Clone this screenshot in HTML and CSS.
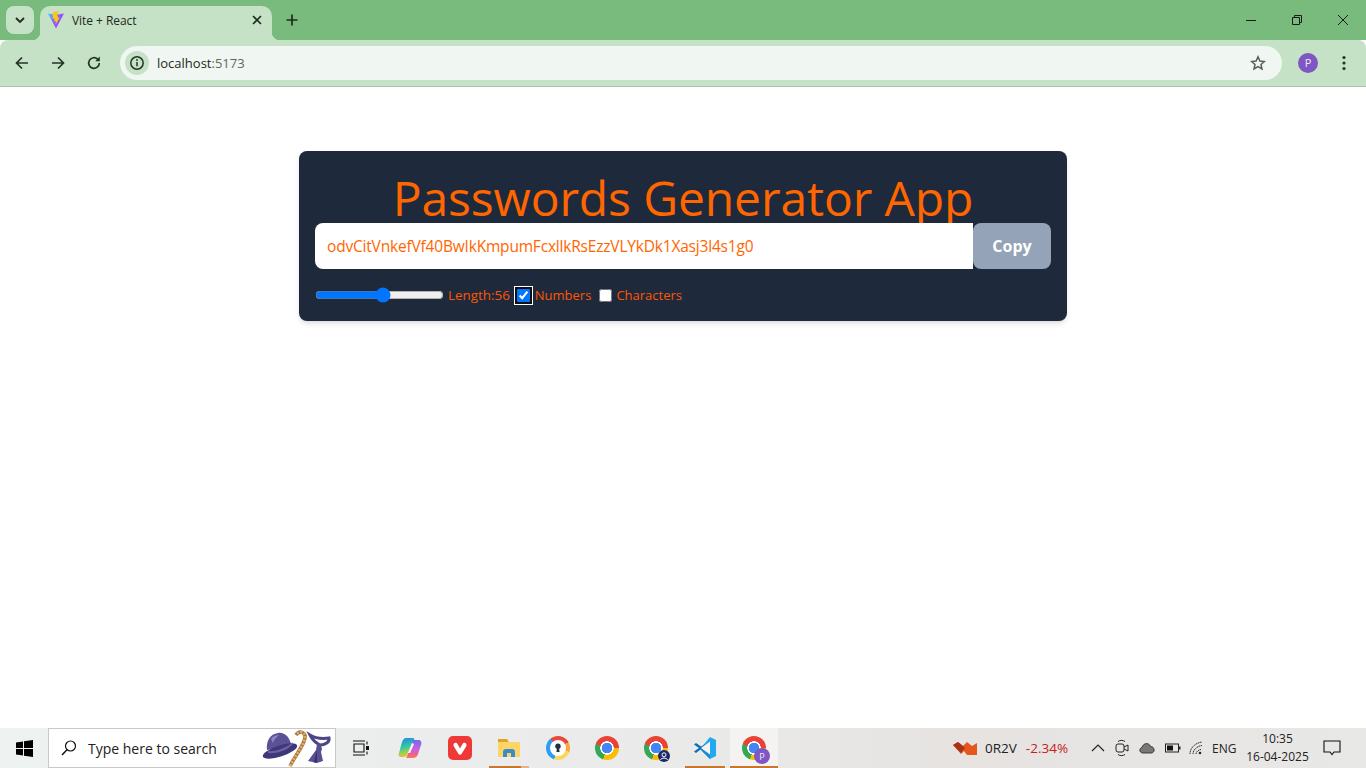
FILE: index.html
```html
<!DOCTYPE html>
<html lang="en">
<head>
  <meta charset="UTF-8">
  <meta name="viewport" content="width=device-width, initial-scale=1.0">
  <title>Vite + React</title>
  <link rel="stylesheet" href="styles.css">
</head>
<body>
  <div class="window">
    <div class="tabstrip">
      <div class="tab-search">
        <svg width="12" height="12" viewBox="0 0 12 12"><path d="M2 4l4 4 4-4" fill="none" stroke="#1f2a20" stroke-width="1.8"/></svg>
      </div>
      <div class="tab">
        <svg class="favicon" width="16" height="18" viewBox="0 0 16 18">
          <defs>
            <linearGradient id="viteGrad" x1="0" y1="0" x2="1" y2="0.700">
              <stop offset="0" stop-color="#41c8ff"/>
              <stop offset="0.550" stop-color="#8a5cf6"/>
              <stop offset="1" stop-color="#bd34fe"/>
            </linearGradient>
          </defs>
          <path d="M0 2.500L8 3.800 16 2.500 8 17.500z" fill="url(#viteGrad)"/>
          <path d="M11 0L5 1.200 4.600 7.800 6.600 7.400 6.200 10.500 7.900 10 7.600 13.500 11.800 6.400 9.500 6.800 10.200 4.600 8.700 4.800z" fill="#ffc517"/>
        </svg>
        <span class="tab-title">Vite + React</span>
        <svg class="tab-close" width="10" height="10" viewBox="0 0 10 10"><path d="M1 1l8 8M9 1l-8 8" stroke="#1f2a20" stroke-width="1.6"/></svg>
      </div>
      <svg class="new-tab" width="12" height="12" viewBox="0 0 12 12"><path d="M6 0.5v11M0.5 6h11" stroke="#1f2a20" stroke-width="1.7"/></svg>
      <div class="win-controls">
        <svg width="12" height="12" viewBox="0 0 12 12"><path d="M1 6.5h10" stroke="#1a1a1a"/></svg>
        <svg width="12" height="12" viewBox="0 0 12 12"><path d="M1.5 3.5h7v7h-7zM3.5 3.5v-2h7v7h-2" fill="none" stroke="#1a1a1a"/></svg>
        <svg width="12" height="12" viewBox="0 0 12 12"><path d="M1 1l10 10M11 1L1 11" stroke="#1a1a1a"/></svg>
      </div>
    </div>

    <div class="toolbar">
      <svg class="nav-icon" width="16" height="16" viewBox="0 0 16 16"><path d="M14 8H2.5M8 2.5L2.5 8 8 13.5" fill="none" stroke="#263228" stroke-width="1.7"/></svg>
      <svg class="nav-icon" width="16" height="16" viewBox="0 0 16 16"><path d="M2 8h11.5M8 2.5L13.5 8 8 13.5" fill="none" stroke="#263228" stroke-width="1.7"/></svg>
      <svg class="nav-icon" width="16" height="16" viewBox="0 0 16 16"><path d="M13.3 8a5.3 5.3 0 1 1-1.6-3.8" fill="none" stroke="#263228" stroke-width="1.7"/><path d="M13.8 1.6v4.6H9.2z" fill="#263228"/></svg>
      <div class="omnibox">
        <div class="site-info">
          <svg width="16" height="16" viewBox="0 0 16 16"><circle cx="8" cy="8" r="6.2" fill="none" stroke="#263228" stroke-width="1.5"/><path d="M8 7v4.2" stroke="#263228" stroke-width="1.5"/><circle cx="8" cy="5" r="0.9" fill="#263228"/></svg>
        </div>
        <span class="url">localhost<span class="url-port">:5173</span></span>
        <svg class="star" width="16" height="16" viewBox="0 0 16 16"><path d="M8 1.8l1.9 4.2 4.5.5-3.4 3 1 4.5L8 11.7l-4 2.3 1-4.5-3.4-3 4.5-.5z" fill="none" stroke="#555f57" stroke-width="1.5"/></svg>
      </div>
      <div class="avatar">P</div>
      <svg class="menu-dots" width="4" height="16" viewBox="0 0 4 16"><circle cx="2" cy="2.5" r="1.6" fill="#263228"/><circle cx="2" cy="8" r="1.6" fill="#263228"/><circle cx="2" cy="13.5" r="1.6" fill="#263228"/></svg>
    </div>

    <main class="page">
      <div class="card">
        <h1 class="card-title">Passwords Generator App</h1>
        <div class="password-row">
          <input class="password-input" type="text" readonly value="odvCitVnkefVf40BwIkKmpumFcxllkRsEzzVLYkDk1Xasj3l4s1g0">
          <button class="copy-btn">Copy</button>
        </div>
        <div class="options">
          <input class="length-range" type="range" min="6" max="100" value="56">
          <label class="opt-label length-label">Length:56</label>
          <input class="opt-check focused" type="checkbox" checked>
          <label class="opt-label numbers-label">Numbers</label>
          <input class="opt-check" type="checkbox">
          <label class="opt-label">Characters</label>
        </div>
      </div>
    </main>

    <div class="taskbar">
      <div class="start">
        <svg width="17" height="17" viewBox="0 0 17 17"><path d="M0 2.5l7-1v6.500H0zM8 1.300l9-1.300v8H8zM0 9h7v6.500l-7-1zM8 9h9v8l-9-1.300z" fill="#000"/></svg>
      </div>
      <div class="searchbox">
        <svg width="18" height="18" viewBox="0 0 18 18"><circle cx="10.500" cy="7" r="5" fill="none" stroke="#111" stroke-width="1.200"/><path d="M7 10.800L2 16" stroke="#111" stroke-width="1.500"/></svg>
        <span class="search-text">Type here to search</span>
        <svg class="doodle" width="70" height="38" viewBox="0 0 70 38">
          <path d="M5 21C4 12 8 5 16 4c6-1 10 3 12 8l2 5z" fill="#5b5296"/>
          <path d="M9 10c2-3 5-4 8-4-2 2-5 4-6 8z" fill="#8d86c0"/>
          <ellipse cx="18" cy="22" rx="18" ry="5.500" fill="#3e3878" transform="rotate(-18 18 22)"/>
          <path d="M6 22c8 1 18-3 25-9l-1 3c-6 6-17 9-24 8z" fill="#6a62a6"/>
          <path d="M28 37C33 27 41 18 43 9c1-6-6-8-9-3" fill="none" stroke="#a9743a" stroke-width="3.600"/>
          <path d="M28 37C33 27 41 18 43 9c1-6-6-8-9-3" fill="none" stroke="#e0b070" stroke-width="2.600" stroke-dasharray="2 1.500"/>
          <path d="M48 6c5 3 12 4 19 3 1 4-4 7-9 7-4-2-8-6-10-10z" fill="none" stroke="#4c4688" stroke-width="3"/>
          <path d="M55 15l4 1 1 4-1 3 2 9-6 2-9-2 8-11z" fill="#565092"/>
          <path d="M55 21l0 12-2 1-1-1z" fill="#37326c"/>
        </svg>
      </div>
      <div class="task-icons">
        <div class="task-slot">
          <svg width="16" height="16" viewBox="0 0 16 16"><path d="M0 1h12M0 15h12M1 4h10v8H1zM14 1.500v3M14 11.500v3" fill="none" stroke="#111" stroke-width="1.100"/><rect x="13" y="6" width="3" height="4" fill="#111"/></svg>
        </div>
        <div class="task-slot wide">
          <svg width="24" height="22" viewBox="0 0 24 22">
            <defs>
              <linearGradient id="copA" x1="0.400" y1="0" x2="0.600" y2="1"><stop offset="0" stop-color="#1f8fe8"/><stop offset="0.450" stop-color="#34c8a0"/><stop offset="0.750" stop-color="#a8d048"/><stop offset="1" stop-color="#f5c030"/></linearGradient>
              <linearGradient id="copB" x1="0.500" y1="0" x2="0.500" y2="1"><stop offset="0" stop-color="#6d6cf0"/><stop offset="0.500" stop-color="#c860e0"/><stop offset="0.800" stop-color="#f06090"/><stop offset="1" stop-color="#f58040"/></linearGradient>
            </defs>
            <path d="M8 1h7c1 0 2 1 1 2l-7 15c-1 1-2 2-3 2H3c-2 0-3-2-2-4L4 5c1-2 2-4 4-4z" fill="url(#copA)"/>
            <path d="M15 3h5c3 0 4 2 3 5l-3 9c-1 3-3 4-5 4H9c-1 0-1-1 0-2l5-12c0-2 0-3 1-4z" fill="url(#copB)"/>
            <path d="M14 6l-4 10 2 0 4-9z" fill="#f8f8fa"/>
          </svg>
        </div>
        <div class="task-slot">
          <svg width="24" height="24" viewBox="0 0 24 24"><rect width="24" height="24" rx="5" fill="#ef3939"/><path d="M5.500 9c0-2.500 3-3 4-1l2.500 4.500L14.500 8c1-2 4-1.500 4 1 0 .8-.4 1.500-1 2.500L13.500 18c-.6 1-2.400 1-3 0L6.500 11.500C6 10.500 5.500 9.800 5.500 9z" fill="#fff"/></svg>
        </div>
        <div class="task-slot running">
          <svg width="24" height="24" viewBox="0 0 24 24"><path d="M1 3h9l2 3H1z" fill="#e0a526"/><path d="M1 6h22v15H1z" fill="#fbd667"/><path d="M6 21v-5a3 3 0 0 1 3-3h6a3 3 0 0 1 3 3v5h-4v-4h-4v4z" fill="#3a8cc9"/></svg>
        </div>
        <div class="task-slot">
          <div class="alt-browser"><div class="alt-browser-core"><svg width="8" height="10" viewBox="0 0 8 10"><circle cx="4" cy="3.200" r="2.700" fill="#22303c"/><path d="M3 4.500h2l.6 4.500H2.400z" fill="#22303c"/></svg></div></div>
        </div>
        <div class="task-slot"><div class="chrome-icon"></div></div>
        <div class="task-slot">
          <div class="chrome-icon"><span class="chrome-badge dark">
            <svg width="10" height="10" viewBox="0 0 10 10"><circle cx="5" cy="3.800" r="2" fill="none" stroke="#fff"/><path d="M1.500 9c.5-2.500 6.500-2.500 7 0" fill="none" stroke="#fff"/></svg>
          </span></div>
        </div>
        <div class="task-slot running code">
          <svg width="24" height="24" viewBox="0 0 24 24"><path d="M17 1l6 3v16l-6 3-10-10z" fill="#23a9f2"/><path d="M17 1v22L7 13l10-7.500z" fill="#1a8ad0"/><path d="M17 6L3 17 1 15.500 6 12 1 8.500 3 7l5 3.600" fill="#0b6fb5"/><path d="M17 5.500v13L8 12z" fill="#f3f3f2"/></svg>
        </div>
        <div class="task-slot active">
          <div class="chrome-icon"><span class="chrome-badge purple">P</span></div>
        </div>
      </div>
      <div class="tray">
        <div class="stock">
          <svg width="24" height="14" viewBox="0 0 24 14"><path d="M0 4l5-3 5 4 4-4 5 4 5-3v12H14l-3-4-3 3z" fill="#e5561c"/><path d="M0 4l5-3 5 4 2 2-4 5z" fill="#a8321a"/></svg>
          <span class="stock-name">0R2V</span>
          <span class="stock-change">-2.34%</span>
        </div>
        <svg class="tray-chevron" width="14" height="8" viewBox="0 0 14 8"><path d="M1 7l6-6 6 6" fill="none" stroke="#222" stroke-width="1.200"/></svg>
        <svg class="tray-icon" width="14" height="18" viewBox="0 0 14 18"><rect x="1" y="5" width="8" height="8" rx="2" fill="none" stroke="#222"/><path d="M9 8l4-2v6l-4-2M3 2.500c2-1.500 5-1.500 7 0M3 15.500c2 1.500 5 1.500 7 0" fill="none" stroke="#222"/></svg>
        <svg class="tray-icon" width="16" height="12" viewBox="0 0 16 12"><path d="M4 11c-4 0-4-5-1-5.500C4 1 10 0 11.500 4.500 16 4.500 16.500 11 12 11z" fill="#777" stroke="#222" stroke-width="0.800"/></svg>
        <svg class="tray-icon" width="16" height="10" viewBox="0 0 16 10"><rect x="0.500" y="1" width="13" height="8" fill="none" stroke="#222"/><rect x="2" y="2.500" width="6" height="5" fill="#111"/><rect x="14" y="3.500" width="1.500" height="3" fill="#222"/></svg>
        <svg class="tray-icon wifi" width="14" height="14" viewBox="0 0 14 14"><path d="M1 13C1 7 6 2 13 1M4 13c0-4 4-8 9-8.500M7 13c0-2 2-4 5-4.500" fill="none" stroke="#333" stroke-dasharray="1.500 0.500"/><circle cx="11" cy="12" r="1.300" fill="#222"/></svg>
        <span class="tray-lang">ENG</span>
        <div class="clock"><span>10:35</span><span>16-04-2025</span></div>
        <svg class="notify" width="18" height="16" viewBox="0 0 18 16"><path d="M1 1h16v11h-6l-2 2.500L7 12H1z" fill="none" stroke="#111" stroke-width="1.100"/></svg>
      </div>
    </div>
  </div>
</body>
</html>
```

FILE: styles.css
```css
html, body {
  margin: 0;
  height: 100%;
}
body {
  font-family: 'Open Sans', 'Noto Sans', sans-serif;
  background-color: #ffffff;
  overflow: hidden;
}
.window {
  display: flex;
  flex-direction: column;
  height: 768px;
}

/* browser chrome */
.tabstrip {
  display: flex;
  align-items: flex-start;
  height: 40px;
  background-color: #79bb7c;
}
.tab-search {
  display: flex;
  align-items: center;
  justify-content: center;
  width: 28px;
  height: 28px;
  margin: 6px 0 0 6px;
  border-radius: 8px;
  background-color: #c5e1c6;
}
.tab {
  position: relative;
  display: flex;
  align-items: center;
  width: 232px;
  height: 34px;
  margin: 6px 0 0 6px;
  box-sizing: border-box;
  padding: 0 10px 6px 8px;
  border-radius: 10px 10px 0 0;
  background-color: #c5e1c6;
}
.tab::before,
.tab::after {
  content: "";
  position: absolute;
  bottom: 0;
  width: 8px;
  height: 8px;
}
.tab::before {
  left: -8px;
  background: radial-gradient(circle at 0 0, #79bb7c 8px, #c5e1c6 8.5px);
}
.tab::after {
  right: -8px;
  background: radial-gradient(circle at 100% 0, #79bb7c 8px, #c5e1c6 8.5px);
}
.favicon {
  flex-shrink: 0;
}
.tab-title {
  flex: 1;
  margin-left: 8px;
  font-size: 12px;
  letter-spacing: -0.05px;
  color: #1f2a20;
}
.new-tab {
  margin: 14px 0 0 14px;
}
.win-controls {
  display: flex;
  gap: 34px;
  margin: 14px 17px 0 auto;
}

.toolbar {
  display: flex;
  align-items: center;
  height: 46px;
  border-bottom: 1px solid #a9c4aa;
  border-radius: 8px 8px 0 0;
  background-color: #c5e1c6;
}
.nav-icon {
  flex-shrink: 0;
  margin-left: 20px;
}
.nav-icon:first-child {
  margin-left: 14px;
}
.omnibox {
  display: flex;
  align-items: center;
  flex: 1;
  height: 34px;
  margin: 0 16px 0 18px;
  border-radius: 17px;
  background-color: #f0f6f1;
}
.site-info {
  display: flex;
  align-items: center;
  justify-content: center;
  width: 24px;
  height: 24px;
  margin-left: 5px;
  border-radius: 50%;
  background-color: #c5e1c6;
}
.url {
  margin-left: 8px;
  font-size: 13px;
  color: #1f2a20;
}
.url-port {
  color: #5c6a5e;
}
.star {
  margin: 0 16px 0 auto;
}
.avatar {
  flex-shrink: 0;
  width: 20px;
  height: 20px;
  border-radius: 50%;
  background-color: #7e57c2;
  color: #f1e8ff;
  font-size: 11px;
  line-height: 20px;
  text-align: center;
}
.menu-dots {
  margin: 0 20px 0 24px;
}

/* the actual page */
.page {
  flex: 1;
  padding-top: 64px;
}
.card {
  width: 768px;
  height: 170px;
  margin: 0 auto;
  box-sizing: border-box;
  padding: 23px 16px 0;
  border-radius: 8px;
  background-color: #1e293b;
  box-shadow: 0 4px 6px -1px rgba(0, 0, 0, 0.1), 0 2px 4px -2px rgba(0, 0, 0, 0.1);
}
.card-title {
  margin: 0 0 1px;
  font-size: 48px;
  font-weight: 400;
  line-height: 48px;
  letter-spacing: -0.13px;
  color: #ff6600;
  text-align: center;
  white-space: nowrap;
}
.password-row {
  position: relative;
  display: flex;
  height: 46px;
}
.password-input {
  flex: 1;
  min-width: 0;
  box-sizing: border-box;
  padding: 0 12px;
  border: 0;
  outline: 0;
  border-radius: 8px 0 0 8px;
  background-color: #ffffff;
  font-family: inherit;
  font-size: 15.5px;
  letter-spacing: -0.19px;
  color: #ff6600;
}
.copy-btn {
  width: 78px;
  padding: 0;
  border: 0;
  border-radius: 8px;
  background-color: #94a3b8;
  font-family: inherit;
  font-size: 16px;
  font-weight: 700;
  color: #ffffff;
}
.options {
  display: flex;
  align-items: center;
  height: 16px;
  margin-top: 18px;
}
.length-range {
  width: 129px;
  height: 16px;
  margin: 0;
}
.opt-label {
  font-size: 13px;
  line-height: 18px;
  color: #ff5500;
}
.length-label {
  margin-left: 4px;
  font-size: 13.4px;
}
.opt-check {
  width: 13px;
  height: 13px;
  margin: 0 4px 0 8px;
}
.focused {
  margin: 0 5px 0 7px;
  border-radius: 3px;
  box-shadow: 0 0 0 2px #101010, 0 0 0 3px #ffffff;
}

/* windows taskbar */
.taskbar {
  display: flex;
  align-items: center;
  height: 40px;
  background: linear-gradient(90deg, #eef2f1 0%, #e9e9e8 55%, #e6e3e1 70%, #e8e8e7 100%);
}
.start {
  display: flex;
  align-items: center;
  justify-content: center;
  width: 48px;
}
.searchbox {
  display: flex;
  align-items: center;
  width: 288px;
  height: 40px;
  box-sizing: border-box;
  padding-left: 11px;
  border: 1px solid #c8c8c8;
  background-color: #ffffff;
}
.search-text {
  margin-left: 10px;
  font-size: 14px;
  color: #222222;
}
.doodle {
  margin: 0 3px 0 auto;
}
.task-icons {
  display: flex;
  height: 40px;
}
.task-slot {
  display: flex;
  align-items: center;
  justify-content: center;
  width: 49px;
  height: 40px;
  box-sizing: border-box;
}
.wide {
  width: 50px;
}
.running {
  position: relative;
}
.running::after {
  content: "";
  position: absolute;
  bottom: 0;
  left: 5px;
  width: 40px;
  height: 2px;
  background: linear-gradient(90deg, #c9772c 80%, #e0b48e 80%);
}
.code::after {
  background: #c9772c;
}
.active {
  margin-left: 1px;
  width: 48px;
  border-bottom: 2px solid #c9772c;
  padding-top: 2px;
  background-color: #f4f3f2;
}
.chrome-icon {
  position: relative;
  width: 24px;
  height: 24px;
  border-radius: 50%;
  background:
    radial-gradient(circle at 50% 50%, #4285f4 0 5px, #ffffff 5.5px 6.5px, transparent 7px),
    conic-gradient(from -70deg, #ea4335 0 160deg, #fbbc04 160deg 270deg, #34a853 270deg 360deg);
}
.chrome-badge {
  position: absolute;
  right: -4px;
  bottom: -4px;
  display: flex;
  align-items: center;
  justify-content: center;
  border-radius: 50%;
}
.chrome-badge.dark {
  right: -2px;
  bottom: -2px;
  width: 12px;
  height: 12px;
  background-color: #1e2a66;
}
.chrome-badge.purple {
  width: 16px;
  height: 16px;
  background-color: #7e57c2;
  color: #f1e8ff;
  font-size: 9px;
}
.alt-browser {
  display: flex;
  align-items: center;
  justify-content: center;
  width: 24px;
  height: 24px;
  border-radius: 50%;
  background: conic-gradient(#e9483a 0 60deg, #f7a93c 60deg 110deg, #fbd75e 110deg 200deg, #2c9df0 200deg 320deg, #e9483a 320deg 360deg);
}
.alt-browser-core {
  display: flex;
  align-items: center;
  justify-content: center;
  width: 16px;
  height: 16px;
  border-radius: 50%;
  background-color: #ffffff;
}
.tray {
  display: flex;
  align-items: center;
  flex: 1;
  min-width: 0;
  height: 40px;
}
.stock {
  display: flex;
  align-items: center;
  margin-left: 175px;
  font-size: 13.5px;
}
.stock-name {
  margin-left: 8px;
  color: #222222;
}
.stock-change {
  margin-left: 9px;
  color: #c4231b;
}
.tray-chevron {
  margin-left: 23px;
}
.tray-icon {
  margin-left: 10px;
}
.wifi {
  margin-left: 8px;
}
.tray-lang {
  margin-left: 9px;
  font-size: 12px;
  color: #222222;
}
.clock {
  display: flex;
  flex-direction: column;
  align-items: center;
  width: 66px;
  margin-left: 8px;
  font-size: 12px;
  line-height: 18px;
  color: #222222;
}
.notify {
  margin-left: 13px;
}
```
